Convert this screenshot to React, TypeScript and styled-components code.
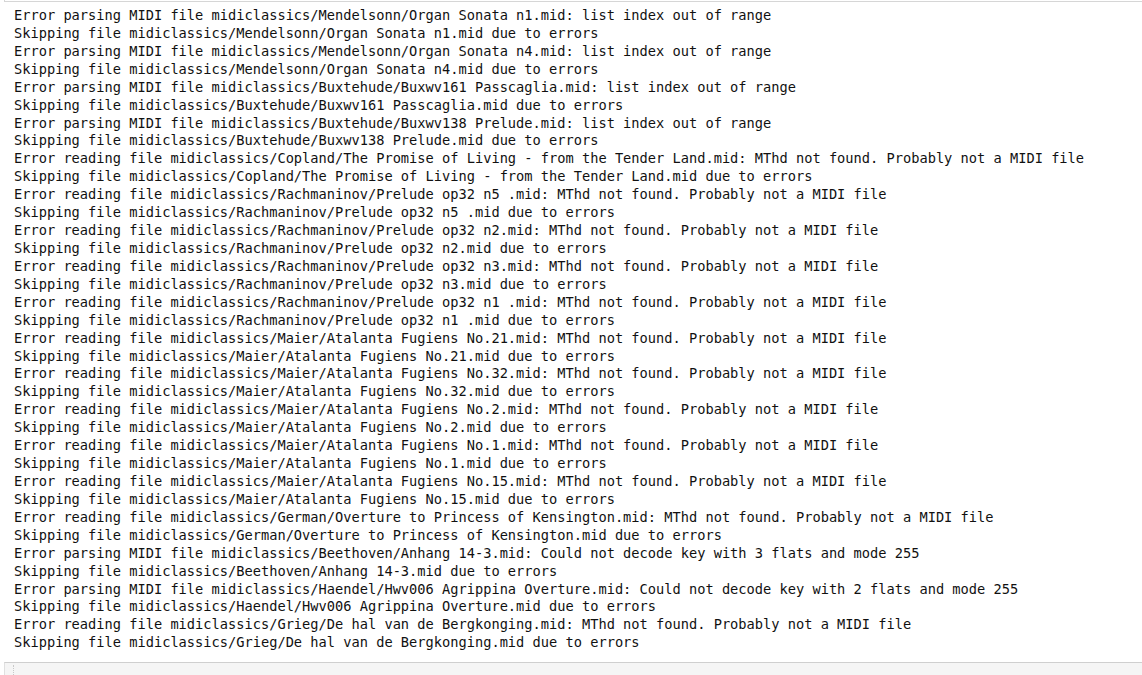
import React from "react";
import styled, { createGlobalStyle } from "styled-components";

const Global = createGlobalStyle`
  html, body { margin: 0; padding: 0; background: #fff; }
  body { overflow: hidden; }
`;

const Page = styled.div`
  width: 1142px;
  height: 675px;
  display: flex;
  flex-direction: column;
  overflow: hidden;
  background: #fff;
`;

const PrevCell = styled.div`
  margin-left: 4px;
  height: 1px;
  border-left: 1px solid #d6d6d6;
  border-bottom: 1px solid #d6d6d6;
  flex: none;
`;

const Output = styled.pre`
  margin: 0;
  padding: 5px 0 0 14px;
  font-family: "DejaVu Sans Mono", monospace;
  font-size: 13.68px;
  line-height: 17.92px;
  color: #111;
  white-space: pre;
  flex: none;
`;

const NextCell = styled.div`
  margin-top: 10px;
  margin-left: 4px;
  flex: 1;
  background: #f5f5f5;
  border-top: 1px solid #cfcfcf;
  border-left: 1px solid #e0e0e0;
  display: flex;
  padding-top: 2px;
`;

const Gutter = styled.div`
  width: 8px;
  border-right: 1px dotted #c8c8c8;
  height: 100%;
`;

const lines = [
  "Error parsing MIDI file midiclassics/Mendelsonn/Organ Sonata n1.mid: list index out of range",
  "Skipping file midiclassics/Mendelsonn/Organ Sonata n1.mid due to errors",
  "Error parsing MIDI file midiclassics/Mendelsonn/Organ Sonata n4.mid: list index out of range",
  "Skipping file midiclassics/Mendelsonn/Organ Sonata n4.mid due to errors",
  "Error parsing MIDI file midiclassics/Buxtehude/Buxwv161 Passcaglia.mid: list index out of range",
  "Skipping file midiclassics/Buxtehude/Buxwv161 Passcaglia.mid due to errors",
  "Error parsing MIDI file midiclassics/Buxtehude/Buxwv138 Prelude.mid: list index out of range",
  "Skipping file midiclassics/Buxtehude/Buxwv138 Prelude.mid due to errors",
  "Error reading file midiclassics/Copland/The Promise of Living - from the Tender Land.mid: MThd not found. Probably not a MIDI file",
  "Skipping file midiclassics/Copland/The Promise of Living - from the Tender Land.mid due to errors",
  "Error reading file midiclassics/Rachmaninov/Prelude op32 n5 .mid: MThd not found. Probably not a MIDI file",
  "Skipping file midiclassics/Rachmaninov/Prelude op32 n5 .mid due to errors",
  "Error reading file midiclassics/Rachmaninov/Prelude op32 n2.mid: MThd not found. Probably not a MIDI file",
  "Skipping file midiclassics/Rachmaninov/Prelude op32 n2.mid due to errors",
  "Error reading file midiclassics/Rachmaninov/Prelude op32 n3.mid: MThd not found. Probably not a MIDI file",
  "Skipping file midiclassics/Rachmaninov/Prelude op32 n3.mid due to errors",
  "Error reading file midiclassics/Rachmaninov/Prelude op32 n1 .mid: MThd not found. Probably not a MIDI file",
  "Skipping file midiclassics/Rachmaninov/Prelude op32 n1 .mid due to errors",
  "Error reading file midiclassics/Maier/Atalanta Fugiens No.21.mid: MThd not found. Probably not a MIDI file",
  "Skipping file midiclassics/Maier/Atalanta Fugiens No.21.mid due to errors",
  "Error reading file midiclassics/Maier/Atalanta Fugiens No.32.mid: MThd not found. Probably not a MIDI file",
  "Skipping file midiclassics/Maier/Atalanta Fugiens No.32.mid due to errors",
  "Error reading file midiclassics/Maier/Atalanta Fugiens No.2.mid: MThd not found. Probably not a MIDI file",
  "Skipping file midiclassics/Maier/Atalanta Fugiens No.2.mid due to errors",
  "Error reading file midiclassics/Maier/Atalanta Fugiens No.1.mid: MThd not found. Probably not a MIDI file",
  "Skipping file midiclassics/Maier/Atalanta Fugiens No.1.mid due to errors",
  "Error reading file midiclassics/Maier/Atalanta Fugiens No.15.mid: MThd not found. Probably not a MIDI file",
  "Skipping file midiclassics/Maier/Atalanta Fugiens No.15.mid due to errors",
  "Error reading file midiclassics/German/Overture to Princess of Kensington.mid: MThd not found. Probably not a MIDI file",
  "Skipping file midiclassics/German/Overture to Princess of Kensington.mid due to errors",
  "Error parsing MIDI file midiclassics/Beethoven/Anhang 14-3.mid: Could not decode key with 3 flats and mode 255",
  "Skipping file midiclassics/Beethoven/Anhang 14-3.mid due to errors",
  "Error parsing MIDI file midiclassics/Haendel/Hwv006 Agrippina Overture.mid: Could not decode key with 2 flats and mode 255",
  "Skipping file midiclassics/Haendel/Hwv006 Agrippina Overture.mid due to errors",
  "Error reading file midiclassics/Grieg/De hal van de Bergkonging.mid: MThd not found. Probably not a MIDI file",
  "Skipping file midiclassics/Grieg/De hal van de Bergkonging.mid due to errors",
];

export default function App() {
  return (
    <>
      <Global />
      <Page>
        <PrevCell />
        <Output>{lines.join("\n")}</Output>
        <NextCell>
          <Gutter />
        </NextCell>
      </Page>
    </>
  );
}
